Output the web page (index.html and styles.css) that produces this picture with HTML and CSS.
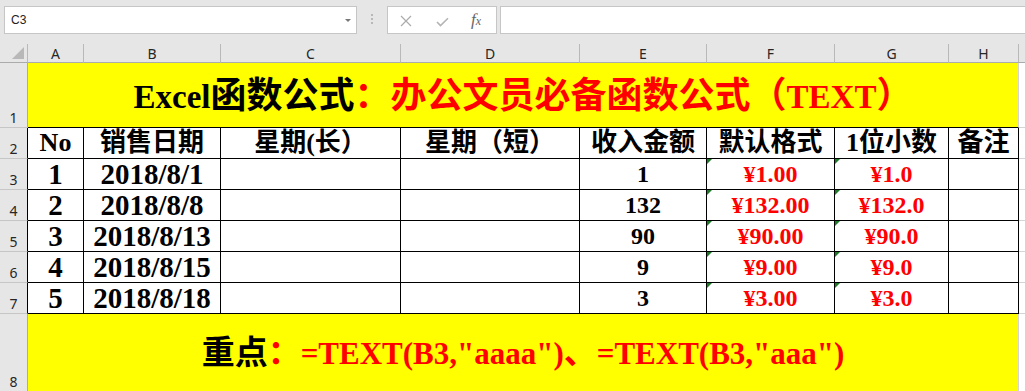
FILE: index.html
```html
<!DOCTYPE html>
<html lang="zh-CN">
<head>
<meta charset="utf-8">
<title>Excel函数公式：TEXT</title>
<link rel="stylesheet" href="styles.css">
</head>
<body>
<div class="formula-bar">
  <div class="name-box"><span class="name">C3</span><span class="caret"></span></div>
  <div class="grip"><i></i><i></i><i></i></div>
  <div class="fx-buttons">
    <svg class="ico ico-x" width="12" height="12" viewBox="0 0 12 12"><path d="M1 1 L11 11 M11 1 L1 11" fill="none" stroke="#ababab" stroke-width="1.2"/></svg>
    <svg class="ico ico-ok" width="13" height="10" viewBox="0 0 13 10"><path d="M1 5 L4.5 8.6 L12 1.2" fill="none" stroke="#b4b4b4" stroke-width="1.6"/></svg>
    <span class="fx">f<span class="fx-x">x</span></span>
  </div>
  <div class="formula-input"></div>
</div>

<div class="sheet">
  <div class="corner"><svg width="13" height="13" viewBox="0 0 13 13"><path d="M12 0 L12 12 L0 12 Z" fill="#b8b8b8"/></svg></div>
  <div class="colh">A</div>
  <div class="colh">B</div>
  <div class="colh">C</div>
  <div class="colh">D</div>
  <div class="colh">E</div>
  <div class="colh">F</div>
  <div class="colh">G</div>
  <div class="colh">H</div>
  <div class="colh colh-last"></div>

  <div class="rowh">1</div>
  <div class="title"><span class="blk">Excel<span class="cj">函数公式</span></span><span class="red"><span class="cj">：办公文员必备函数公式（</span>TEXT<span class="cj">）</span></span></div>
  <div class="blank"></div>

  <div class="rowh tb">2</div>
  <div class="cell hd">No</div>
  <div class="cell hd">销售日期</div>
  <div class="cell hd">星期(长）</div>
  <div class="cell hd">星期（短）</div>
  <div class="cell hd">收入金额</div>
  <div class="cell hd">默认格式</div>
  <div class="cell hd">1位小数</div>
  <div class="cell hd">备注</div>
  <div class="blank"></div>

  <div class="rowh tb">3</div>
  <div class="cell big">1</div>
  <div class="cell big">2018/8/1</div>
  <div class="cell"></div>
  <div class="cell"></div>
  <div class="cell num">1</div>
  <div class="cell num red flag">¥1.00</div>
  <div class="cell num red flag">¥1.0</div>
  <div class="cell"></div>
  <div class="blank"></div>

  <div class="rowh tb">4</div>
  <div class="cell big">2</div>
  <div class="cell big">2018/8/8</div>
  <div class="cell"></div>
  <div class="cell"></div>
  <div class="cell num">132</div>
  <div class="cell num red flag">¥132.00</div>
  <div class="cell num red flag">¥132.0</div>
  <div class="cell"></div>
  <div class="blank"></div>

  <div class="rowh tb">5</div>
  <div class="cell big">3</div>
  <div class="cell big">2018/8/13</div>
  <div class="cell"></div>
  <div class="cell"></div>
  <div class="cell num">90</div>
  <div class="cell num red flag">¥90.00</div>
  <div class="cell num red flag">¥90.0</div>
  <div class="cell"></div>
  <div class="blank"></div>

  <div class="rowh tb">6</div>
  <div class="cell big">4</div>
  <div class="cell big">2018/8/15</div>
  <div class="cell"></div>
  <div class="cell"></div>
  <div class="cell num">9</div>
  <div class="cell num red flag">¥9.00</div>
  <div class="cell num red flag">¥9.0</div>
  <div class="cell"></div>
  <div class="blank"></div>

  <div class="rowh tb">7</div>
  <div class="cell big">5</div>
  <div class="cell big">2018/8/18</div>
  <div class="cell"></div>
  <div class="cell"></div>
  <div class="cell num">3</div>
  <div class="cell num red flag">¥3.00</div>
  <div class="cell num red flag">¥3.0</div>
  <div class="cell"></div>
  <div class="blank"></div>

  <div class="rowh">8</div>
  <div class="note"><span class="cj">重点</span><span class="red"><span class="cj">：</span>=TEXT(B3,"aaaa")<span class="cj">、</span>=TEXT(B3,"aaa")</span></div>
  <div class="blank"></div>
</div>
</body>
</html>
```

FILE: styles.css
```css
* { box-sizing: border-box; }
html, body { margin: 0; padding: 0; }
body {
  width: 1025px;
  height: 391px;
  overflow: hidden;
  background: #fff;
  font-family: "Liberation Sans", "Noto Sans CJK SC", sans-serif;
}

/* formula bar */
.formula-bar {
  height: 44px;
  background: #e6e6e6;
  display: flex;
  align-items: flex-start;
  padding: 6px 0 0 4px;
}
.name-box {
  width: 353px;
  height: 28px;
  background: #fff;
  border: 1px solid #c6c6c6;
  display: flex;
  align-items: center;
  justify-content: space-between;
  padding: 0 5px 0 6px;
  font-size: 12px;
  color: #222;
}
.caret {
  width: 0;
  height: 0;
  border-left: 3px solid transparent;
  border-right: 3px solid transparent;
  border-top: 3px solid #777;
}
.grip {
  margin: 8px 0 0 14px;
  width: 3px;
  display: flex;
  flex-direction: column;
  gap: 2px;
}
.grip i {
  display: block;
  width: 2px;
  height: 2px;
  background: #b8b8b8;
}
.fx-buttons {
  margin-left: 13px;
  width: 110px;
  height: 28px;
  background: #fff;
  border: 1px solid #c6c6c6;
  display: flex;
  align-items: center;
  padding-left: 12px;
}
.ico-x { margin-top: 1px; }
.ico-ok { margin-left: 24px; margin-top: 3px; }
.fx {
  margin-left: 22px;
  font-family: "Liberation Serif", serif;
  font-style: italic;
  font-size: 17px;
  color: #666;
  margin-top: -1px;
}
.fx-x { font-size: 12px; }
.formula-input {
  flex: 1;
  margin-left: 3px;
  margin-right: -4px;
  height: 28px;
  background: #fff;
  border: 1px solid #c6c6c6;
}

/* sheet grid */
.sheet {
  display: grid;
  grid-template-columns: 28px 56px 137px 180px 179px 127px 128px 114px 70px 1fr;
  grid-template-rows: 19px 65px repeat(6, 31px) 78px;
}
.corner, .colh {
  background: #e6e6e6;
  border-right: 1px solid #b9b9b9;
  border-bottom: 1px solid #ababab;
}
.corner {
  display: flex;
  align-items: flex-end;
  justify-content: flex-end;
  padding: 0 2px 2px 0;
}
.colh {
  font-family: "Noto Sans", sans-serif;
  font-size: 14px;
  line-height: 14px;
  color: #262626;
  display: flex;
  align-items: flex-end;
  justify-content: center;
  padding-bottom: 1px;
}
.colh-last { border-right: none; }
.rowh {
  background: #e6e6e6;
  border-right: 1px solid #ababab;
  border-bottom: 1px solid #c6c6c6;
  font-family: "Noto Sans", sans-serif;
  font-size: 14px;
  line-height: 14px;
  color: #262626;
  display: flex;
  align-items: flex-end;
  justify-content: center;
  padding-bottom: 2px;
}
.rowh.tb { border-right-color: #000; }

.blank { border-bottom: 1px solid #d4d4d4; }

.title, .note, .cell {
  font-family: "Liberation Serif", "Noto Sans CJK SC", serif;
  font-weight: 700;
  line-height: 1;
  color: #000;
  display: flex;
  align-items: center;
  justify-content: center;
  white-space: nowrap;
}
.title {
  grid-column: span 8;
  background: #ffff00;
  border-right: 1px solid #d4d4d4;
  border-bottom: 1px solid #000;
  font-size: 33px;
  padding-top: 1px;
}
.title .cj { font-size: 36px; }
.note {
  grid-column: span 8;
  background: #ffff00;
  border-right: 1px solid #d4d4d4;
  font-size: 31px;
}
.note .cj { font-size: 33px; }
.red { color: #ff0000; }
.blk { color: #000; }

.cell {
  position: relative;
  border-right: 1px solid #000;
  border-bottom: 1px solid #000;
}
.hd { font-size: 26px; }
.big { font-size: 29px; }
.num { font-size: 24px; }
.flag::before {
  content: "";
  position: absolute;
  top: 0;
  left: 0;
  width: 0;
  height: 0;
  border-top: 5px solid #1c7a28;
  border-right: 5px solid transparent;
}
```
